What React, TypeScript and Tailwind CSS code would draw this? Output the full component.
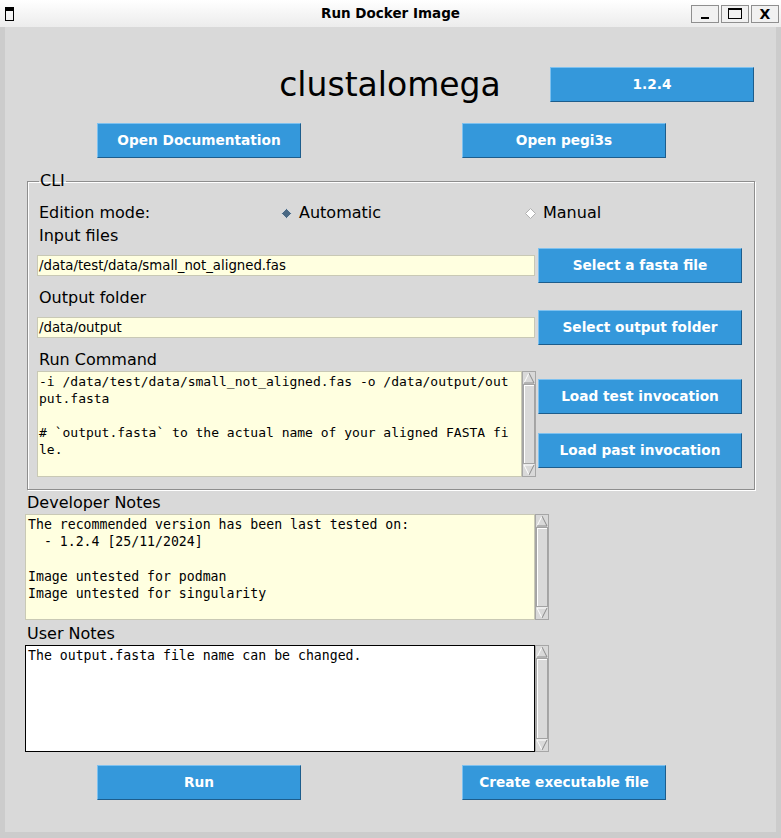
import React from 'react';

const sans = "font-['DejaVu_Sans',sans-serif]";
const mono = "font-['DejaVu_Sans_Mono',monospace]";

const Button = ({ label }: { label: string }) => (
  <button
    className={`h-[35px] w-[204px] shrink-0 border border-t-[#7ec1ef] border-l-[#7ec1ef] border-b-[#1d5d8c] border-r-[#1d5d8c] bg-[#3498db] text-[13.7px] font-bold text-white ${sans}`}
  >
    {label}
  </button>
);

const Arrow = ({ up }: { up?: boolean }) => (
  <svg width="12" height="12" viewBox="0 0 12 12" className="block">
    {up ? (
      <>
        <polygon points="6,1 11,11 1,11" fill="#d9d9d9" />
        <polyline points="1,11 6,1" fill="none" stroke="#ffffff" strokeWidth="1" />
        <polyline points="6,1 11,11 1,11" fill="none" stroke="#8c8c8c" strokeWidth="1" />
      </>
    ) : (
      <>
        <polygon points="1,1 11,1 6,11" fill="#d9d9d9" />
        <polyline points="6,11 1,1 11,1" fill="none" stroke="#ffffff" strokeWidth="1" />
        <polyline points="11,1 6,11" fill="none" stroke="#8c8c8c" strokeWidth="1" />
      </>
    )}
  </svg>
);

const Scrollbar = () => (
  <div className="flex w-[14px] shrink-0 flex-col border border-[#a6a6a6] bg-[#d9d9d9]">
    <Arrow up />
    <div className="flex-1 border border-[#a3a3a3] bg-[#d9d9d9] shadow-[inset_1px_1px_0_#ffffff]" />
    <Arrow />
  </div>
);

const Diamond = ({ on }: { on?: boolean }) => (
  <svg width="11" height="11" viewBox="0 0 11 11" className="mr-[7px] shrink-0">
    <polygon
      points="5.5,0.5 10.5,5.5 5.5,10.5 0.5,5.5"
      fill={on ? '#4a6984' : '#ffffff'}
      stroke={on ? '#d0d6dc' : '#b0b0b0'}
      strokeWidth="1"
    />
  </svg>
);

const Label = ({ children, className = '' }: { children: React.ReactNode; className?: string }) => (
  <div className={`flex h-[22px] items-center text-[16px] text-black ${sans} ${className}`}>{children}</div>
);

const Entry = ({ value }: { value: string }) => (
  <div
    className={`flex h-[21px] w-[498px] shrink-0 items-center border border-[#c9c9b5] bg-[#ffffe0] pl-[1px] text-[13.3px] text-black ${sans}`}
  >
    {value}
  </div>
);

const TitleBar = () => (
  <div className="flex h-[27px] items-center bg-gradient-to-b from-[#ffffff] to-[#ececec] pl-[2px] pr-[2px]">
    <div className="w-[88px]">
      <div className="ml-[3px] h-[14px] w-[9px] border border-black border-t-[4px]" />
    </div>
    <div className={`flex-1 text-center text-[13.5px] font-bold text-black ${sans}`}>Run Docker Image</div>
    <div className="flex gap-[2px]">
      <div className="flex h-[18px] w-[28px] items-end justify-center border border-[#8f8f8f] bg-[#f1f1f1] pb-[3px]">
        <div className="h-[2px] w-[8px] bg-black" />
      </div>
      <div className="flex h-[18px] w-[28px] items-center justify-center border border-[#8f8f8f] bg-[#f1f1f1]">
        <div className="h-[11px] w-[14px] border border-black border-t-[2px]" />
      </div>
      <div
        className={`flex h-[18px] w-[28px] items-center justify-center border border-[#8f8f8f] bg-[#f1f1f1] text-[14px] font-bold leading-none text-black ${sans}`}
      >
        X
      </div>
    </div>
  </div>
);

export default function App() {
  return (
    <div className="flex h-[838px] w-[781px] flex-col bg-[#cccccc]">
      <TitleBar />
      <div className="mx-[5px] flex h-[805px] flex-col bg-[#d9d9d9]">
        {/* header */}
        <div className="mt-[40px] flex h-[35px] items-center">
          <div className={`ml-[250px] w-[270px] text-center text-[33px] leading-none text-black ${sans}`}>
            clustalomega
          </div>
          <div className="ml-[25px]">
            <Button label="1.2.4" />
          </div>
        </div>

        <div className="mt-[21px] flex">
          <div className="ml-[92px]">
            <Button label="Open Documentation" />
          </div>
          <div className="ml-[161px]">
            <Button label="Open pegi3s" />
          </div>
        </div>

        {/* CLI frame */}
        <fieldset className="ml-[22px] mt-[14px] w-[728px] border border-[#8e8e8e] px-[9px] pb-[12px] [box-shadow:inset_1px_1px_0_#ffffff,1px_1px_0_#ffffff]">
          <legend className={`ml-[2px] px-[1px] text-[16px] leading-[18px] text-black ${sans}`}>CLI</legend>

          <div className="mt-[12px] flex">
            <Label className="w-[244px] pl-[2px]">Edition mode:</Label>
            <Label className="w-[244px]">
              <Diamond on />
              Automatic
            </Label>
            <Label>
              <Diamond />
              Manual
            </Label>
          </div>

          <Label className="mt-[1px] pl-[2px]">Input files</Label>
          <div className="mt-[1px] flex items-center">
            <Entry value="/data/test/data/small_not_aligned.fas" />
            <div className="ml-[3px]">
              <Button label="Select a fasta file" />
            </div>
          </div>

          <Label className="mt-[4px] pl-[2px]">Output folder</Label>
          <div className="mt-[1px] flex items-center">
            <Entry value="/data/output" />
            <div className="ml-[3px]">
              <Button label="Select output folder" />
            </div>
          </div>

          <Label className="mt-[4px] pl-[2px]">Run Command</Label>
          <div className="flex items-start">
            <div className="flex h-[106px]">
              <div
                className={`w-[485px] border border-[#c9c9b5] bg-[#ffffe0] pl-[1px] pt-[1px] text-[13px] leading-[17px] whitespace-pre text-black ${mono}`}
              >
                {'-i /data/test/data/small_not_aligned.fas -o /data/output/out\nput.fasta\n\n# `output.fasta` to the actual name of your aligned FASTA fi\nle.'}
              </div>
              <Scrollbar />
            </div>
            <div className="ml-[2px] flex flex-col gap-[19px] pt-[8px]">
              <Button label="Load test invocation" />
              <Button label="Load past invocation" />
            </div>
          </div>
        </fieldset>

        {/* notes */}
        <Label className="mt-[2px] pl-[22px]">Developer Notes</Label>
        <div className="ml-[20px] flex h-[106px]">
          <div
            className={`w-[510px] border border-[#c9c9b5] bg-[#ffffe0] pl-[2px] pt-[1px] text-[13.2px] leading-[17.3px] whitespace-pre text-black ${mono}`}
          >
            {'The recommended version has been last tested on:\n  - 1.2.4 [25/11/2024]\n\nImage untested for podman\nImage untested for singularity'}
          </div>
          <Scrollbar />
        </div>

        <Label className="mt-[3px] pl-[22px]">User Notes</Label>
        <div className="ml-[20px] flex h-[107px]">
          <div
            className={`w-[510px] border-[1.5px] border-black bg-white pl-[2px] pt-[1px] text-[13.2px] leading-[17.3px] whitespace-pre text-black ${mono}`}
          >
            {'The output.fasta file name can be changed.'}
          </div>
          <Scrollbar />
        </div>

        <div className="mt-[13px] flex">
          <div className="ml-[92px]">
            <Button label="Run" />
          </div>
          <div className="ml-[161px]">
            <Button label="Create executable file" />
          </div>
        </div>
      </div>
    </div>
  );
}
